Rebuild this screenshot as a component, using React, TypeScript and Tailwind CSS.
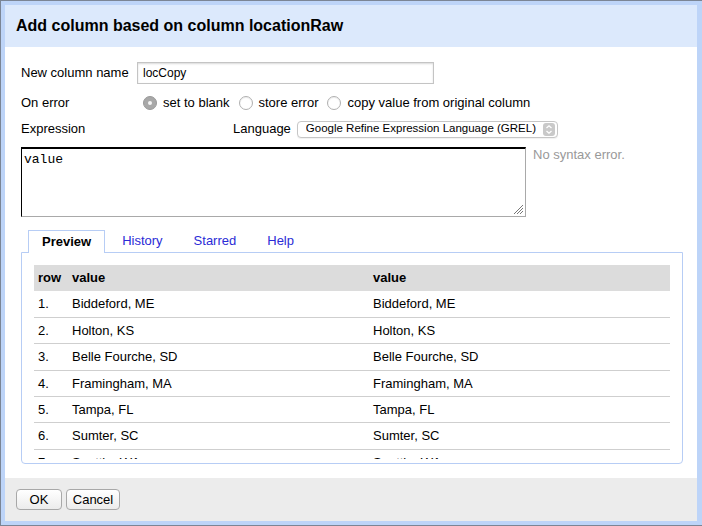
import React from 'react';

const rows = [
  'Biddeford, ME',
  'Holton, KS',
  'Belle Fourche, SD',
  'Framingham, MA',
  'Tampa, FL',
  'Sumter, SC',
  'Seattle, WA',
  'Austin, TX'
];

const Radio = ({ checked, label }: { checked?: boolean; label: string }) => (
  <label className="flex items-center gap-[6px]">
    {checked ? (
      <span className="w-[14px] h-[14px] rounded-full bg-[#a8a8a8] border border-[#999] flex items-center justify-center">
        <span className="w-[4px] h-[4px] rounded-full bg-[#f4f4f4]"></span>
      </span>
    ) : (
      <span className="w-[14px] h-[14px] rounded-full bg-white border border-[#b0b0b0] shadow-[inset_0_1px_1px_rgba(0,0,0,0.08)]"></span>
    )}
    <span>{label}</span>
  </label>
);

const App = () => {
  return <div className="w-[702px] h-[526px] overflow-hidden bg-[#7b8595] pt-px pl-px pb-px font-['Liberation_Sans',Arial,sans-serif] text-[13px] text-black">
      <div className="w-[701px] h-[524px] bg-[#bdd4f8] pt-[4px] pl-[4px] pr-[5px] pb-[4px] flex flex-col">
        {/* Title bar */}
        <div className="h-[42px] bg-[#dce9fc] flex items-center pl-[11px]">
          <h1 className="text-[16px] font-bold leading-none">Add column based on column locationRaw</h1>
        </div>

        {/* Body */}
        <div className="h-[431px] bg-white pt-[15px] pl-[16px]">
          <div className="flex items-center h-[22px]">
            <span className="w-[116px]">New column name</span>
            <div className="w-[297px] h-[22px] border border-[#c4c4c4] shadow-[inset_0_1px_2px_rgba(0,0,0,0.15)] flex items-center px-[5px] text-[12px]">
              locCopy
            </div>
          </div>

          <div className="flex items-center h-[18px] mt-[10px]">
            <span className="w-[122px]">On error</span>
            <div className="flex items-center gap-[9px]">
              <Radio checked label="set to blank" />
              <Radio label="store error" />
              <Radio label="copy value from original column" />
            </div>
          </div>

          <div className="flex items-center h-[18px] mt-[8px]">
            <span className="w-[212px]">Expression</span>
            <span className="mr-[6px]">Language</span>
            <div className="w-[261px] h-[17px] border border-[#c6c6c6] rounded-[4px] bg-white flex items-center pl-[8px] pr-[2px] text-[11.5px] leading-none shadow-[0_1px_1px_rgba(0,0,0,0.06)]">
              <span className="flex-1 whitespace-nowrap overflow-hidden">Google Refine Expression Language (GREL)</span>
              <svg width="12" height="13" viewBox="0 0 12 13" className="shrink-0">
                <rect x="0" y="0" width="12" height="13" rx="3" fill="#c9c9c9" />
                <path d="M3.5 5 L6 2.8 L8.5 5" stroke="#fff" strokeWidth="1.3" fill="none" />
                <path d="M3.5 8 L6 10.2 L8.5 8" stroke="#fff" strokeWidth="1.3" fill="none" />
              </svg>
            </div>
          </div>

          <div className="flex items-start mt-[9px]">
            <div className="relative w-[505px] h-[70px] border-t-2 border-l border-t-black border-l-black border-r border-b border-r-[#a9a9a9] border-b-[#a9a9a9] pl-[2px] pt-[1px] font-['Liberation_Mono',monospace] text-[13px]">
              value
              <svg className="absolute right-[1px] bottom-[1px]" width="12" height="12" viewBox="0 0 12 12">
                <path d="M11 2 L2 11 M11 5 L5 11 M11 8 L8 11" stroke="#777" strokeWidth="1" />
              </svg>
            </div>
            <span className="ml-[7px] text-[#999] leading-[16px]">No syntax error.</span>
          </div>

          {/* Tabs */}
          <div className="mt-[13px] w-[662px]">
            <div className="flex items-end pl-[7px] gap-[3px] h-[22px]">
              <div className="h-[23px] -mb-px border border-b-0 border-[#b7cdf5] bg-white px-[13px] flex items-center font-bold relative z-10">
                Preview
              </div>
              <div className="h-[22px] px-[14px] flex items-center text-[#2b2bd6]">History</div>
              <div className="h-[22px] px-[14px] flex items-center text-[#2b2bd6]">Starred</div>
              <div className="h-[22px] px-[14px] flex items-center text-[#2b2bd6]">Help</div>
            </div>
            <div className="h-[212px] border border-[#b7cdf5] rounded-b-[4px] pt-[12px] px-[12px]">
              <div className="h-[194px] overflow-hidden">
                <table className="w-full border-collapse text-left">
                  <thead>
                    <tr className="h-[26px] bg-[#dcdcdc]">
                      <th className="w-[34px] pl-[4px] font-bold">row</th>
                      <th className="w-[301px] pl-[4px] font-bold">value</th>
                      <th className="pl-[4px] font-bold">value</th>
                    </tr>
                  </thead>
                  <tbody>
                    {rows.map((r, i) => <tr key={i} className="h-[26.4px] border-b border-[#cfcfcf]">
                        <td className="pl-[4px]">{i + 1}.</td>
                        <td className="pl-[4px]">{r}</td>
                        <td className="pl-[4px]">{r}</td>
                      </tr>)}
                  </tbody>
                </table>
              </div>
            </div>
          </div>
        </div>

        {/* Footer */}
        <div className="h-[43px] bg-[#ececec] pt-[11px] pl-[11px] flex items-start gap-[4px]">
          <button className="w-[46px] h-[21px] border border-[#a8a8a8] rounded-[4px] bg-gradient-to-b from-white to-[#ececec] text-[13px] leading-none">OK</button>
          <button className="w-[54px] h-[21px] border border-[#a8a8a8] rounded-[4px] bg-gradient-to-b from-white to-[#ececec] text-[13px] leading-none">Cancel</button>
        </div>
      </div>
    </div>;
};

export default App;
